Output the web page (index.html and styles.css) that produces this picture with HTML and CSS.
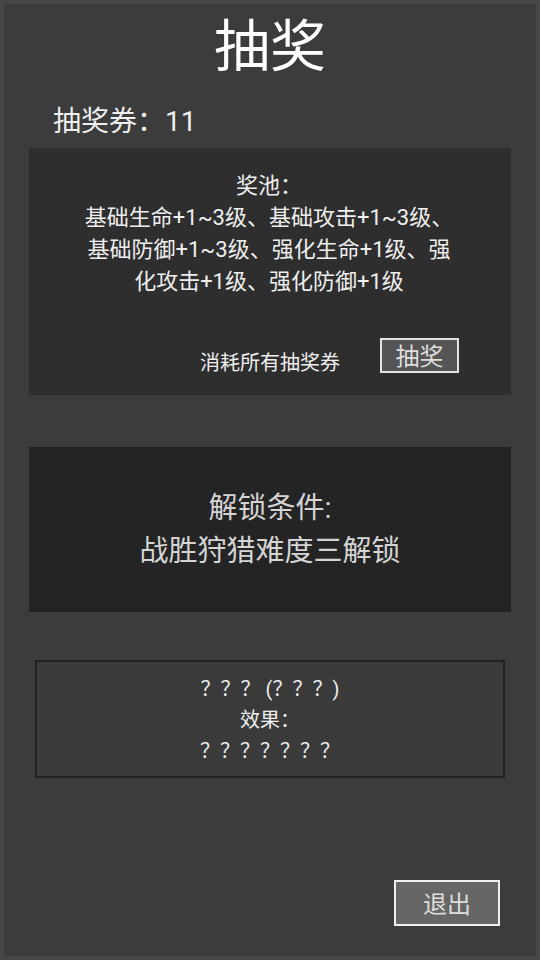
FILE: index.html
```html
<!DOCTYPE html>
<html lang="zh-CN">
<head>
    <meta charset="UTF-8">
    <meta name="viewport" content="width=device-width, initial-scale=1.0">
    <title>抽奖</title>
    <link rel="stylesheet" href="styles.css">
</head>
<body>

    <div class="lottery-panel">
        <h1 class="title">抽奖</h1>
        <div class="ticket-count">抽奖券：<span id="tickets">11</span></div>

        <div class="pool-box">
            <div class="pool-text">奖池：<br>基础生命+1~3级、基础攻击+1~3级、基础防御+1~3级、强化生命+1级、强化攻击+1级、强化防御+1级</div>
            <div class="draw-row">
                <span class="draw-hint">消耗所有抽奖券</span>
                <button type="button" class="draw-button">抽奖</button>
            </div>
        </div>

        <div class="locked-box">
            <div class="locked-text">解锁条件:<br>战胜狩猎难度三解锁</div>
        </div>

        <div class="reward-box">
            <div class="reward-line">？？？ (？？？)</div>
            <div class="reward-line">效果：</div>
            <div class="reward-line">？？？？？？？</div>
        </div>

        <button type="button" class="exit-button" onclick="window.history.back();">退出</button>
    </div>

</body>
</html>
```

FILE: styles.css
```css
    body {
        font-family: Roboto, "Noto Sans CJK SC", sans-serif;
        margin: 0;
        padding: 4px;
        background-color: #474747;
    }

    .lottery-panel {
        height: 952px;
        box-sizing: border-box;
        background-color: #3c3c3c;
        display: flex;
        flex-direction: column;
        color: #eeeeee;
    }

    .title {
        margin: 13px 0 0;
        font-size: 56px;
        font-weight: normal;
        line-height: 60px;
        text-align: center;
        color: #ffffff;
    }

    .ticket-count {
        margin-top: 25px;
        padding-left: 49px;
        font-size: 28px;
        line-height: 40px;
    }

    .pool-box {
        margin: 6px 25px 0;
        padding: 22px 52px 22px 50px;
        height: 247px;
        box-sizing: border-box;
        background-color: #2e2e2e;
    }

    .pool-text {
        font-size: 22px;
        line-height: 32px;
        text-align: center;
    }

    .draw-row {
        margin-top: 40px;
        display: flex;
        justify-content: flex-end;
        align-items: flex-end;
        gap: 40px;
    }

    .draw-hint {
        font-size: 20px;
        line-height: 24px;
        margin-bottom: -2px;
    }

    button {
        font-family: Roboto, "Noto Sans CJK SC", sans-serif;
        color: #dddddd;
        cursor: pointer;
        padding: 0;
        display: flex;
        align-items: center;
        justify-content: center;
    }

    .draw-button {
        width: 79px;
        height: 35px;
        padding-top: 2px;
        border: 2px solid #e4e4e4;
        background-color: #555555;
        font-size: 24px;
        line-height: 28px;
    }

    .locked-box {
        margin: 52px 25px 0;
        padding-top: 40px;
        height: 165px;
        box-sizing: border-box;
        background-color: #242424;
    }

    .locked-text {
        font-size: 29px;
        line-height: 43px;
        text-align: center;
        color: #d4d4d4;
    }

    .reward-box {
        margin: 48px 31px 0;
        padding: 12px 0 9px;
        border: 2px solid #222222;
        background-color: #3a3a3a;
    }

    .reward-line {
        font-size: 20px;
        line-height: 31px;
        text-align: center;
    }

    .exit-button {
        margin: auto 36px 30px auto;
        width: 106px;
        height: 46px;
        padding-top: 3px;
        border: 2px solid #f0f0f0;
        background-color: #666666;
        font-size: 24px;
        line-height: 30px;
    }
```
